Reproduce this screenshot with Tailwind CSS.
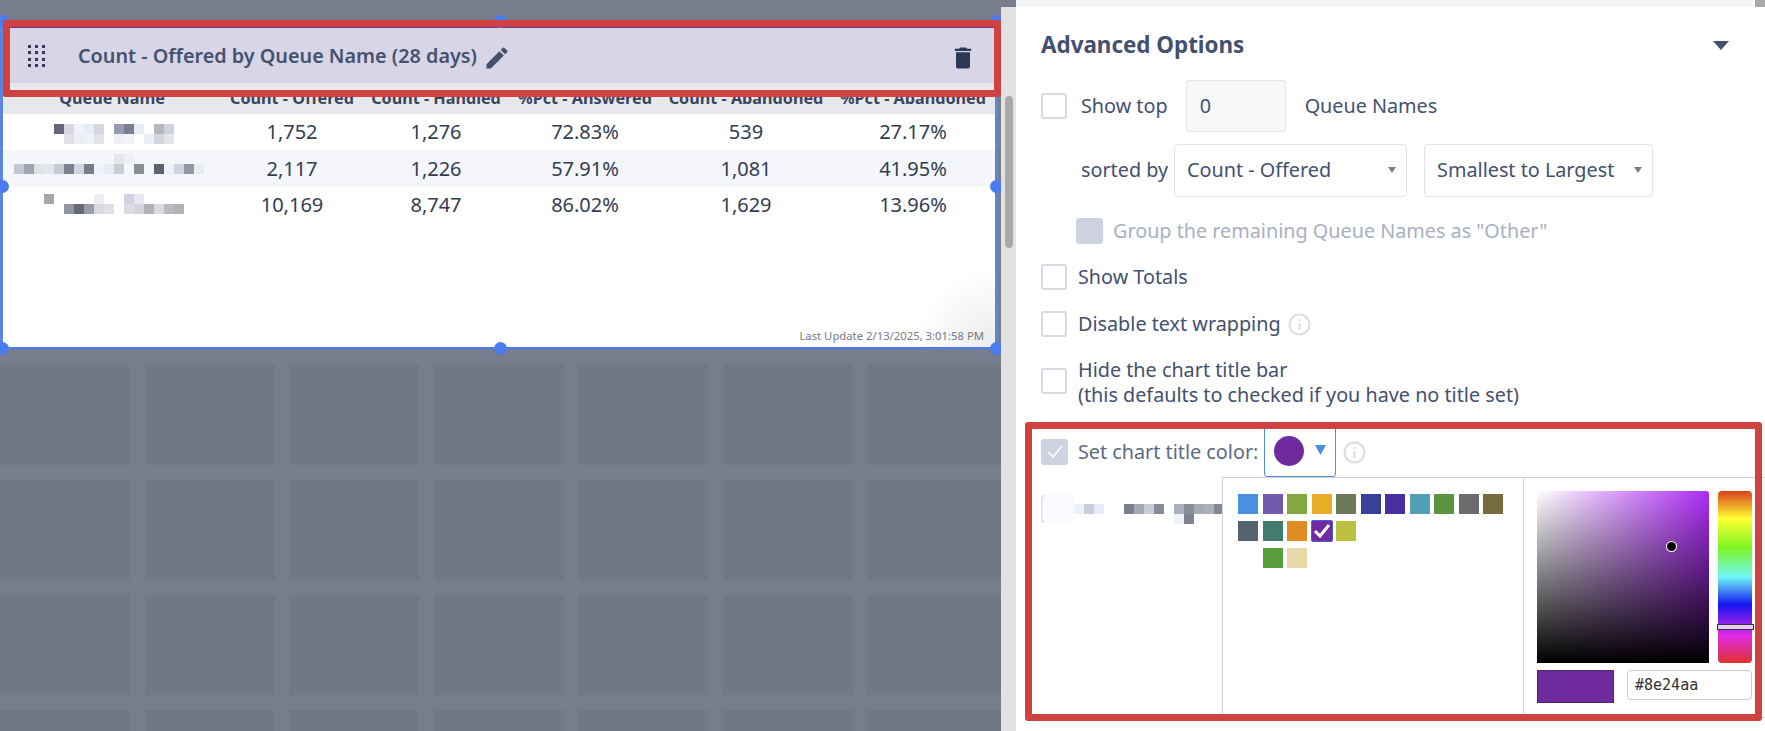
<!DOCTYPE html>
<html lang="en">

<head>
  <meta charset="UTF-8">
  <title>Chart options</title>
  <script src="https://cdn.jsdelivr.net/npm/@tailwindcss/browser@4"></script>
</head>

<body class="bg-white">
  <div class="relative flex w-[1765px] h-[731px] overflow-hidden font-['Noto_Sans',sans-serif] text-[#43506e]">

    <!-- Dashboard canvas -->
    <div class="relative w-[1016px] h-full shrink-0 bg-[#777d8c] overflow-hidden">
      <div class="grid grid-cols-[repeat(6,130px)_134px] auto-rows-[100px] gap-x-[14.5px] gap-y-[15px] pt-[365px]">
        <div class="bg-[#717787]"></div><div class="bg-[#717787]"></div><div class="bg-[#717787]"></div><div class="bg-[#717787]"></div><div class="bg-[#717787]"></div><div class="bg-[#717787]"></div><div class="bg-[#717787]"></div>
        <div class="bg-[#717787]"></div><div class="bg-[#717787]"></div><div class="bg-[#717787]"></div><div class="bg-[#717787]"></div><div class="bg-[#717787]"></div><div class="bg-[#717787]"></div><div class="bg-[#717787]"></div>
        <div class="bg-[#717787]"></div><div class="bg-[#717787]"></div><div class="bg-[#717787]"></div><div class="bg-[#717787]"></div><div class="bg-[#717787]"></div><div class="bg-[#717787]"></div><div class="bg-[#717787]"></div>
        <div class="bg-[#717787]"></div><div class="bg-[#717787]"></div><div class="bg-[#717787]"></div><div class="bg-[#717787]"></div><div class="bg-[#717787]"></div><div class="bg-[#717787]"></div><div class="bg-[#717787]"></div>
      </div>

      <!-- Selected widget -->
      <div class="absolute left-0 top-[20px] w-[998px] h-[329px] flex flex-col bg-white border-x-[3px] border-b-2 border-x-[#5d85dd] border-b-[#4a7cf0]">
        <div class="flex items-center h-[63px] shrink-0 pl-[25px] pr-[18px] bg-[#d8d5e6] border-t-[8px] border-t-[#6f2a9e]">
          <svg class="shrink-0" width="17" height="22" viewBox="0 0 17 22" fill="#2f3a5a">
            <rect x="0" y="0" width="3" height="3" /><rect x="7" y="0" width="3" height="3" /><rect x="14" y="0" width="3" height="3" />
            <rect x="0" y="6" width="3" height="3" /><rect x="7" y="6" width="3" height="3" /><rect x="14" y="6" width="3" height="3" />
            <rect x="0" y="13" width="3" height="3" /><rect x="7" y="13" width="3" height="3" /><rect x="14" y="13" width="3" height="3" />
            <rect x="0" y="19" width="3" height="3" /><rect x="7" y="19" width="3" height="3" /><rect x="14" y="19" width="3" height="3" />
          </svg>
          <span class="ml-[33px] w-[401px] text-[19.8px] font-semibold text-[#45526f] whitespace-nowrap">Count - Offered by Queue Name (28 days)</span>
          <svg class="ml-[4px] mt-[4px] shrink-0" width="28" height="28" viewBox="0 0 24 24" fill="#43506e">
            <path d="M3 17.25V21h3.75L17.81 9.94l-3.75-3.75L3 17.25zM20.71 7.04c.39-.39.39-1.02 0-1.41l-2.34-2.34c-.39-.39-1.02-.39-1.41 0l-1.83 1.83 3.75 3.75 1.83-1.83z" />
          </svg>
          <svg class="ml-auto mt-[4px] shrink-0" width="28" height="28" viewBox="0 0 24 24" fill="#2c3858">
            <path d="M6 19c0 1.1.9 2 2 2h8c1.1 0 2-.9 2-2V7H6v12zM19 4h-3.5l-1-1h-5l-1 1H5v2h14V4z" />
          </svg>
        </div>

        <!-- Table -->
        <div class="grid grid-cols-[218px_142px_146px_152px_170px_164px] items-center h-[31px] shrink-0 bg-[#e6e8ec] text-[16.2px] font-bold text-center text-[#3a4560] whitespace-nowrap">
          <div>Queue Name</div><div>Count - Offered</div><div>Count - Handled</div><div>%Pct - Answered</div><div>Count - Abandoned</div><div>%Pct - Abandoned</div>
        </div>
        <div class="grid grid-cols-[218px_142px_146px_152px_170px_164px] items-center h-[36px] text-[20px] text-center text-[#333d52]">
          <svg class="block overflow-visible" width="218" height="36" viewBox="3 114 218 36">
            <rect x="54" y="124" width="10" height="10" fill="#65667a" /><rect x="64" y="124" width="10" height="10" fill="#d5d6de" /><rect x="74" y="124" width="10" height="10" fill="#f0f2f8" /><rect x="84" y="124" width="10" height="10" fill="#e5edf8" /><rect x="94" y="124" width="10" height="10" fill="#d6d8e0" /><rect x="114" y="124" width="10" height="10" fill="#9a9bb2" /><rect x="124" y="124" width="10" height="10" fill="#7a7f8f" /><rect x="134" y="124" width="10" height="10" fill="#e8ecf2" /><rect x="154" y="124" width="10" height="10" fill="#b5b7c0" /><rect x="164" y="124" width="10" height="10" fill="#cfd2dc" />
            <rect x="64" y="134" width="10" height="10" fill="#e0e1e6" /><rect x="74" y="134" width="10" height="10" fill="#eceef2" /><rect x="84" y="134" width="10" height="10" fill="#eef1f6" /><rect x="94" y="134" width="10" height="10" fill="#e2e3e8" /><rect x="114" y="134" width="10" height="10" fill="#eef0f6" /><rect x="124" y="134" width="10" height="10" fill="#f0f3f8" /><rect x="144" y="134" width="10" height="10" fill="#eceff8" /><rect x="154" y="134" width="10" height="10" fill="#d5d6dc" /><rect x="164" y="134" width="10" height="10" fill="#e5e6ea" />
          </svg>
          <div>1,752</div><div>1,276</div><div>72.83%</div><div>539</div><div>27.17%</div>
        </div>
        <div class="grid grid-cols-[218px_142px_146px_152px_170px_164px] items-center h-[37px] bg-[#f5f6fa] text-[20px] text-center text-[#333d52]">
          <svg class="block overflow-visible" width="218" height="37" viewBox="3 150 218 37">
            <rect x="114" y="154" width="10" height="10" fill="#e5e6ea" /><rect x="124" y="154" width="10" height="10" fill="#eff0f2" />
            <rect x="14" y="164" width="10" height="10" fill="#c5c7d2" /><rect x="24" y="164" width="10" height="10" fill="#a0a4ae" /><rect x="34" y="164" width="10" height="10" fill="#dfe2e8" /><rect x="44" y="164" width="10" height="10" fill="#e3e6ec" /><rect x="54" y="164" width="10" height="10" fill="#c8cbd3" /><rect x="64" y="164" width="10" height="10" fill="#7c8090" /><rect x="74" y="164" width="10" height="10" fill="#d0d5de" /><rect x="84" y="164" width="10" height="10" fill="#777c88" /><rect x="94" y="164" width="10" height="10" fill="#f0f3fa" /><rect x="104" y="164" width="10" height="10" fill="#e8ecf6" /><rect x="114" y="164" width="10" height="10" fill="#c8ccd6" /><rect x="134" y="164" width="10" height="10" fill="#8a8d98" /><rect x="154" y="164" width="10" height="10" fill="#5d6272" /><rect x="164" y="164" width="10" height="10" fill="#eef1f8" /><rect x="174" y="164" width="10" height="10" fill="#d0d3e0" /><rect x="184" y="164" width="10" height="10" fill="#9598a2" /><rect x="194" y="164" width="10" height="10" fill="#e8eaf4" />
          </svg>
          <div>2,117</div><div>1,226</div><div>57.91%</div><div>1,081</div><div>41.95%</div>
        </div>
        <div class="grid grid-cols-[218px_142px_146px_152px_170px_164px] items-center h-[36px] text-[20px] text-center text-[#333d52]">
          <svg class="block overflow-visible" width="218" height="36" viewBox="3 187 218 36">
            <rect x="44" y="194" width="10" height="10" fill="#a5a6ae" /><rect x="94" y="194" width="10" height="10" fill="#eeeef6" /><rect x="124" y="194" width="10" height="10" fill="#d0d0e2" /><rect x="134" y="194" width="10" height="10" fill="#e8e8ee" />
            <rect x="64" y="204" width="10" height="10" fill="#95969f" /><rect x="74" y="204" width="10" height="10" fill="#66697a" /><rect x="84" y="204" width="10" height="10" fill="#9a9ca6" /><rect x="94" y="204" width="10" height="10" fill="#d8dadf" /><rect x="104" y="204" width="10" height="10" fill="#dfe0e4" /><rect x="124" y="204" width="10" height="10" fill="#dddee3" /><rect x="134" y="204" width="10" height="10" fill="#d5d6db" /><rect x="144" y="204" width="10" height="10" fill="#b0b2b8" /><rect x="154" y="204" width="10" height="10" fill="#d8dade" /><rect x="164" y="204" width="10" height="10" fill="#b8bac0" /><rect x="174" y="204" width="10" height="10" fill="#b0b2b8" />
          </svg>
          <div>10,169</div><div>8,747</div><div>86.02%</div><div>1,629</div><div>13.96%</div>
        </div>
        <div class="flex-1 flex items-end justify-end pb-[2px] pr-[11px] text-[11.3px] text-[#777a80] bg-[radial-gradient(circle_at_100%_100%,rgba(0,0,0,0.08),transparent_80px)]">Last Update 2/13/2025, 3:01:58 PM</div>
      </div>

      <!-- Resize handles -->
      <div class="absolute left-[-4px] top-[15px] w-[13px] h-[13px] rounded-full bg-[#4a7cf0]"></div>
      <div class="absolute left-[494px] top-[15px] w-[13px] h-[13px] rounded-full bg-[#4a7cf0]"></div>
      <div class="absolute left-[990px] top-[15px] w-[13px] h-[13px] rounded-full bg-[#4a7cf0]"></div>
      <div class="absolute left-[-4px] top-[180px] w-[13px] h-[13px] rounded-full bg-[#4a7cf0]"></div>
      <div class="absolute left-[990px] top-[180px] w-[13px] h-[13px] rounded-full bg-[#4a7cf0]"></div>
      <div class="absolute left-[-4px] top-[342px] w-[13px] h-[13px] rounded-full bg-[#4a7cf0]"></div>
      <div class="absolute left-[494px] top-[342px] w-[13px] h-[13px] rounded-full bg-[#4a7cf0]"></div>
      <div class="absolute left-[990px] top-[342px] w-[13px] h-[13px] rounded-full bg-[#4a7cf0]"></div>

      <!-- Panel scrollbar -->
      <div class="absolute right-0 top-[7px] bottom-0 w-[15px] bg-[#e2e2e2]">
        <div class="ml-[4px] mt-[89px] w-[8px] h-[152px] rounded-full bg-[#a9a9a9]"></div>
      </div>
    </div>

    <!-- Options panel -->
    <div class="relative flex-1 min-w-0 flex flex-col">
      <div class="flex h-[7px] shrink-0">
        <div class="w-[737px] bg-[#f3f4f6]"></div>
        <div class="w-[2px] bg-white"></div>
        <div class="flex-1 bg-[#a9a9a9]"></div>
      </div>
      <div class="pl-[25px] text-[19.8px]">
        <div class="flex items-center justify-between h-[73px] pt-[3px] pr-[36px]">
          <h2 class="text-[22.4px] font-bold">Advanced Options</h2>
          <svg width="16" height="9" viewBox="0 0 16 9" fill="#43506e"><path d="M0 0h16l-8 9z" /></svg>
        </div>

        <div class="flex items-center h-[52px]">
          <div class="w-[26px] h-[26px] rounded-[3px] border-2 border-[#d6dae2] bg-white"></div>
          <span class="ml-[14px]">Show top</span>
          <div class="ml-[18px] flex items-center w-[100px] h-[52px] pl-[13px] rounded-[3px] border border-[#e2e4e8] bg-[#f8f8f8]">0</div>
          <span class="ml-[19px]">Queue Names</span>
        </div>

        <div class="flex items-center h-[53px] mt-[12px] pl-[40px]">
          <span class="-mt-[2px]">sorted by</span>
          <div class="ml-[6px] flex items-center justify-between w-[233px] h-[53px] pl-[12px] pr-[10px] pb-[2px] rounded-[4px] border border-[#e2e4e8]">
            Count - Offered
            <svg width="8" height="6" viewBox="0 0 8 6" fill="#777e8c"><path d="M0 0h8l-4 6z" /></svg>
          </div>
          <div class="ml-[17px] flex items-center justify-between w-[229px] h-[53px] pl-[12px] pr-[10px] pb-[2px] rounded-[4px] border border-[#e2e4e8]">
            Smallest to Largest
            <svg width="8" height="6" viewBox="0 0 8 6" fill="#777e8c"><path d="M0 0h8l-4 6z" /></svg>
          </div>
        </div>

        <div class="flex items-center h-[26px] mt-[21px] pl-[35px]">
          <div class="w-[27px] h-[26px] rounded-[3px] bg-[#cdd3e0]"></div>
          <span class="ml-[10px] text-[#a9b0bf]">Group the remaining Queue Names as "Other"</span>
        </div>

        <div class="flex items-center h-[26px] mt-[20px]">
          <div class="w-[26px] h-[26px] rounded-[3px] border-2 border-[#d6dae2] bg-white"></div>
          <span class="ml-[11px]">Show Totals</span>
        </div>

        <div class="flex items-center h-[26px] mt-[21px]">
          <div class="w-[26px] h-[26px] rounded-[3px] border-2 border-[#d6dae2] bg-white"></div>
          <span class="ml-[11px]">Disable text wrapping</span>
          <svg class="ml-[7px]" width="23" height="23" viewBox="0 0 23 23">
            <circle cx="11.5" cy="11.5" r="10" fill="none" stroke="#dedede" stroke-width="2" />
            <rect x="10.5" y="6" width="2" height="2" fill="#dedede" /><rect x="10.5" y="10" width="2" height="7" fill="#dedede" />
          </svg>
        </div>

        <div class="flex items-center h-[50px] mt-[20px]">
          <div class="-mt-[2px] w-[26px] h-[26px] rounded-[3px] border-2 border-[#d6dae2] bg-white"></div>
          <div class="ml-[11px] leading-[25px]">Hide the chart title bar<br>(this defaults to checked if you have no title set)</div>
        </div>

        <div class="flex items-center h-[49px] mt-[21px]">
          <div class="-mt-[2px] flex items-center justify-center w-[27px] h-[26px] rounded-[3px] bg-[#cdd3e0]">
            <svg width="16" height="13" viewBox="0 0 16 13" fill="none" stroke="#fff" stroke-width="1.5"><path d="M1 7l5 5 9-11" /></svg>
          </div>
          <span class="-mt-[1px] ml-[10px] text-[#5d6a83]">Set chart title color:</span>
          <div class="ml-[6px] flex w-[72px] h-[49px] pl-[9px] pt-[7px] rounded-b-[3px] border border-[#4a90e2]">
            <div class="w-[30px] h-[30px] rounded-full bg-[#6f2a9e]"></div>
            <svg class="ml-[11px] mt-[9px]" width="11" height="10" viewBox="0 0 11 10" fill="#4a90e2"><path d="M0 0h11l-5.5 10z" /></svg>
          </div>
          <svg class="-mt-[1px] ml-[7px]" width="23" height="23" viewBox="0 0 23 23">
            <circle cx="11.5" cy="11.5" r="10" fill="none" stroke="#dedede" stroke-width="2" />
            <rect x="10.5" y="6" width="2" height="2" fill="#dedede" /><rect x="10.5" y="10" width="2" height="7" fill="#dedede" />
          </svg>
        </div>

        <!-- Blurred title value, partly under the colour menu -->
        <svg class="block mt-[17px]" width="181" height="32" viewBox="1041 494 181 32">
          <rect x="1044" y="494" width="30" height="30" fill="#fafbfe" />
          <path d="M1045 496h-2q-1 0-1 1v24q0 1 1 1h2" fill="none" stroke="#d4d8e0" stroke-width="1.2" />
          <rect x="1074" y="504" width="10" height="10" fill="#eef0f7" /><rect x="1084" y="504" width="10" height="10" fill="#cccdd8" /><rect x="1094" y="504" width="10" height="10" fill="#e8ecf8" /><rect x="1124" y="504" width="10" height="10" fill="#7a818c" /><rect x="1134" y="504" width="10" height="10" fill="#a3a8b4" /><rect x="1144" y="504" width="10" height="10" fill="#c8ccd6" /><rect x="1154" y="504" width="10" height="10" fill="#878c98" /><rect x="1174" y="504" width="10" height="10" fill="#abb0bc" /><rect x="1184" y="504" width="10" height="10" fill="#888d98" /><rect x="1194" y="504" width="10" height="10" fill="#a6abb6" /><rect x="1204" y="504" width="10" height="10" fill="#abb0bb" /><rect x="1214" y="504" width="8" height="10" fill="#838890" />
          <rect x="1174" y="514" width="10" height="10" fill="#f0f3f8" /><rect x="1184" y="514" width="10" height="10" fill="#7f848f" />
        </svg>
      </div>

      <!-- Colour menu -->
      <div class="absolute left-[206px] top-[477px] w-[560px] h-[241px] flex bg-white border border-[#cdd2dc]">
        <div class="w-[300px] shrink-0 pl-[15px] pt-[16px]">
          <div class="grid grid-cols-[repeat(11,20px)] auto-rows-[20px] gap-x-[4.5px] gap-y-[7px]">
            <div class="bg-[#4a90e2]"></div><div class="bg-[#7359ab]"></div><div class="bg-[#84a840]"></div><div class="bg-[#e8ac28]"></div><div class="bg-[#6b7a5a]"></div><div class="bg-[#384098]"></div><div class="bg-[#4a2f9f]"></div><div class="bg-[#559eb8]"></div><div class="bg-[#5a9441]"></div><div class="bg-[#6b6b6b]"></div><div class="bg-[#766a3f]"></div>
            <div class="bg-[#556270]"></div><div class="bg-[#437c6f]"></div><div class="bg-[#e08a23]"></div>
            <div class="flex items-center justify-center w-[22px] h-[22px] -m-px rounded-[2px] bg-[#6f2a9e] border border-[#4a5fe0]">
              <svg width="18" height="16" viewBox="0 0 18 16" fill="none" stroke="#fff" stroke-width="3"><path d="M2 8l5 5 9-11" /></svg>
            </div>
            <div class="bg-[#bcc03f]"></div>
            <div class="col-start-2 bg-[#589e3c]"></div><div class="bg-[#e9d9a8]"></div>
          </div>
        </div>
        <div class="flex-1 border-l border-[#cdd2dc] pl-[13px] pt-[13px]">
          <div class="flex gap-[9px] items-start">
            <div class="relative w-[172px] h-[172px] rounded-t-[3px] bg-[#ad2cf5] bg-[linear-gradient(to_top,#000,transparent),linear-gradient(to_right,#fff,transparent)]">
              <div class="absolute left-[130px] top-[51px] w-[9px] h-[9px] rounded-full bg-black ring-1 ring-white"></div>
            </div>
            <div class="relative w-[34px] h-[172px] rounded-[4px] bg-[linear-gradient(to_bottom,#d9421c,#ffff33_16%,#7df522_33%,#6ff7f7_50%,#1414f0_66%,#e22ae8_84%,#e0322e)]">
              <div class="absolute left-[-1px] top-[133px] w-[37px] h-[6px] bg-[#e8c9f5] border border-[#333]"></div>
            </div>
          </div>
          <div class="flex items-start gap-[13px] mt-[7px]">
            <div class="w-[77px] h-[33px] bg-[#6f2a9e] border border-[#4b2a68]"></div>
            <div class="flex items-center w-[125px] h-[30px] pl-[7px] rounded-[4px] border border-[#cccccc] font-['DejaVu_Sans_Mono',monospace] text-[15px] text-[#333333]">#8e24aa</div>
          </div>
        </div>
      </div>
    </div>

    <!-- Highlight frames -->
    <div class="absolute left-[3px] top-[20px] w-[998px] h-[77px] rounded-[2px] border-[7px] border-[#cf4240]"></div>
    <div class="absolute left-[1025px] top-[422px] w-[737px] h-[299px] rounded-[3px] border-[7px] border-[#cf4240]"></div>
  </div>
</body>

</html>
